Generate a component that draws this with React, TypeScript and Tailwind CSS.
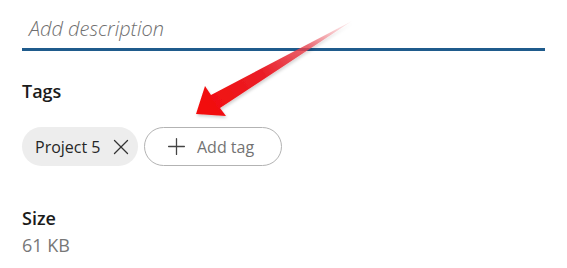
import { X, Plus } from "lucide-react";

function Arrow() {
  // red callout arrow pointing at the "Add tag" button
  return (
    <svg
      className="absolute left-0 top-0 pointer-events-none"
      width={567}
      height={268}
      viewBox="0 0 567 268"
    >
      <defs>
        <linearGradient id="arrowFill" x1="352" y1="21" x2="205" y2="108" gradientUnits="userSpaceOnUse">
          <stop offset="0" stopColor="#f6b0b6" stopOpacity="0.2" />
          <stop offset="0.3" stopColor="#e84450" stopOpacity="0.8" />
          <stop offset="0.6" stopColor="#ea1f28" />
          <stop offset="1" stopColor="#f20d0d" />
        </linearGradient>
        <filter id="arrowShadow" x="-20%" y="-20%" width="140%" height="140%">
          <feDropShadow dx="1" dy="2" stdDeviation="1.5" floodColor="#000" floodOpacity="0.18" />
        </filter>
      </defs>
      <polygon
        points="352,21 211,95 205,86 196,114 226,116 220,108"
        fill="url(#arrowFill)"
        filter="url(#arrowShadow)"
      />
    </svg>
  );
}

export default function App() {
  return (
    <div className="relative w-[567px] h-[268px] bg-white overflow-hidden font-['Open_Sans',sans-serif] text-[#1b1b1b]">
      <div className="px-[22px]">
        <div className="w-[523px] pt-[16px] pb-[6px] border-b-[3px] border-[#1f5b8c]">
          <div className="pl-[7px] text-[20px] leading-[26px] italic font-light text-[#6f6f6f]">Add description</div>
        </div>

        <h2 className="mt-[28px] text-[18px] leading-[24px] font-semibold">Tags</h2>

        <div className="mt-[24px] flex items-center gap-[6px]">
          <div className="h-[39px] w-[116px] pl-[13px] pr-[4px] flex items-center justify-between rounded-full bg-[#ededed]">
            <span className="text-[16px] text-[#262626]">Project 5</span>
            <X className="w-[26px] h-[26px] text-[#333]" strokeWidth={1.2} />
          </div>
          <button className="h-[39px] w-[138px] pl-[18px] flex items-center gap-[7px] rounded-full border border-[#b3b3b3] bg-white">
            <Plus className="w-[27px] h-[27px] text-[#444]" strokeWidth={1.15} />
            <span className="text-[16px] text-[#737373]">Add tag</span>
          </button>
        </div>

        <h2 className="mt-[41px] text-[18px] leading-[22px] font-semibold">Size</h2>
        <p className="mt-[4px] text-[18px] leading-[24px] text-[#777]">61 KB</p>
      </div>
      <Arrow />
    </div>
  );
}
